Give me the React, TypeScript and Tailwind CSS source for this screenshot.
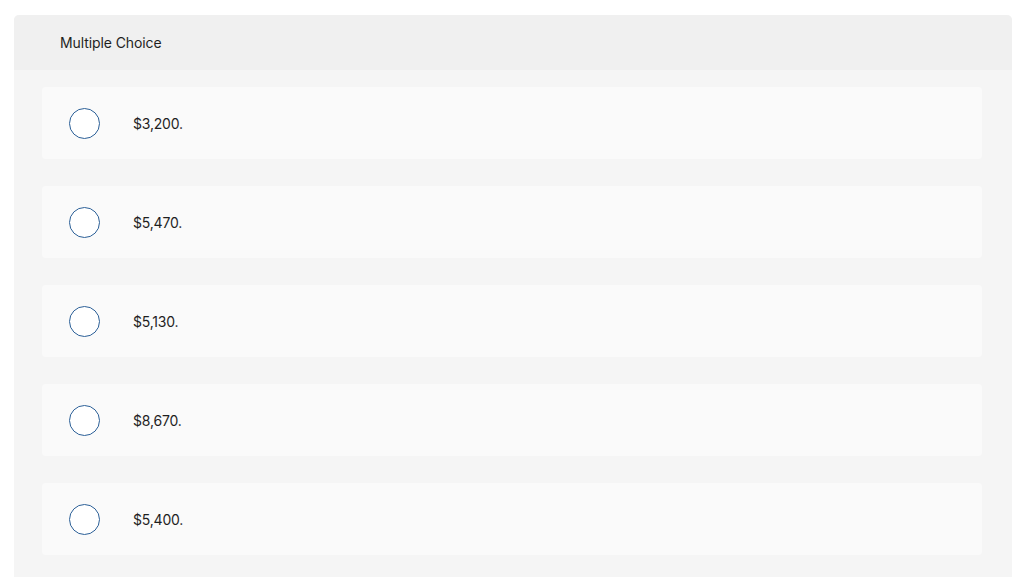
import React from 'react';

const choices = ['$3,200.', '$5,470.', '$5,130.', '$8,670.', '$5,400.'];

export default function App() {
  return (
    <div className="min-h-[577px] bg-white pt-[15px] pl-[14px] pr-[12px] font-['Inter','Lato',sans-serif] text-[#1f1f1f]">
      <div className="rounded-t-[5px] overflow-hidden bg-[#f5f5f5]">
        <div className="h-[55px] bg-[#f0f0f0] flex items-center pl-[46px] text-[14px] tracking-[-0.1px]">Multiple Choice</div>
        <div className="pt-[17px] pl-[28px] pr-[30px] pb-[30px] flex flex-col gap-[27px]">
          {choices.map((c) => (
            <div key={c} className="h-[72px] rounded-[4px] bg-[#fafafa] flex items-center pl-[27px]">
              <span className="w-[31px] h-[31px] rounded-full border-[1.5px] border-[#2b5f97] bg-white shrink-0" />
              <span className="ml-[33px] text-[14px] tracking-[-0.2px]">{c}</span>
            </div>
          ))}
        </div>
      </div>
    </div>
  );
}
